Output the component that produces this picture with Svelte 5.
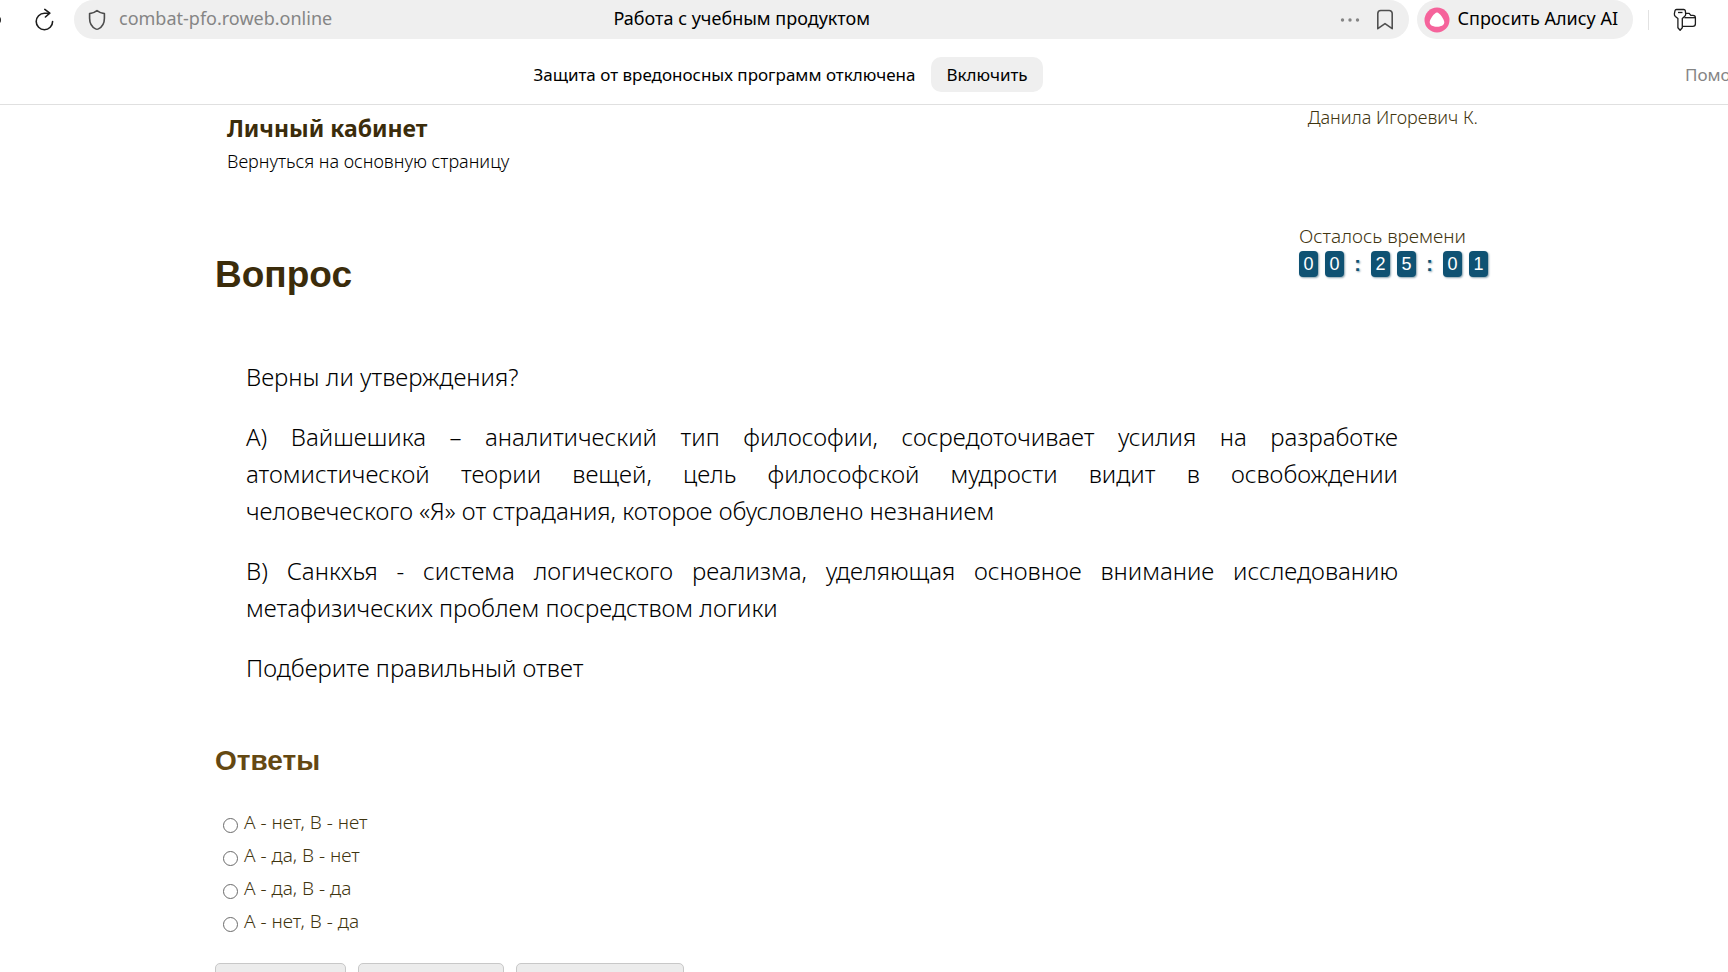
<script>
	const statements = [
		'Верны ли утверждения?',
		'A) Вайшешика – аналитический тип философии, сосредоточивает усилия на разработке атомистической теории вещей, цель философской мудрости видит в освобождении человеческого\u00a0«Я» от страдания, которое обусловлено незнанием',
		'B) Санкхья - система логического реализма, уделяющая основное внимание исследованию метафизических проблем посредством логики',
		'Подберите правильный ответ'
	];

	const answers = ['A - нет, B - нет', 'A - да, B - нет', 'A - да, B - да', 'A - нет, B - да'];

	// remaining time as hours, minutes, seconds
	const time = ['00', '25', '01'];

	let selected = $state('');
</script>

<div class="window">
	<div class="toolbar">
		<button class="icon back" aria-label="Назад">
			<svg width="6" height="20" viewBox="0 0 6 20"><circle cx="-3" cy="10" r="4" fill="#222" /></svg>
		</button>
		<button class="icon reload" aria-label="Обновить">
			<svg width="20" height="24" viewBox="0 0 20 24" fill="none" stroke="#1c1c1c" stroke-width="1.6" stroke-linecap="round" stroke-linejoin="round">
				<path d="M17.600 13.500A8.200 8.200 0 1 1 9.400 5.300h5" />
				<path d="M9.800 1.400l5 3.800-4.400 3.800" />
			</svg>
		</button>

		<div class="address">
			<svg width="18" height="22" viewBox="0 0 18 22" fill="none" stroke="#4c4c4c" stroke-width="1.6" stroke-linejoin="round">
				<path d="M9 1.600c2.200 1.700 4.700 2.700 7.400 3v4.600c0 5.400-2.600 8.900-6 10.700q-1.400 0.700-2.800 0c-3.400-1.800-6-5.300-6-10.700V4.600c2.700-.3 5.200-1.300 7.400-3z" />
			</svg>
			<span class="host">combat-pfo.roweb.online</span>
			<span class="page-title">Работа с учебным продуктом</span>
			<div class="actions">
				<button class="icon" aria-label="Ещё">
					<svg width="20" height="6" viewBox="0 0 20 6" fill="#858585">
						<circle cx="2.500" cy="3" r="1.700" />
						<circle cx="10" cy="3" r="1.700" />
						<circle cx="17.500" cy="3" r="1.700" />
					</svg>
				</button>
				<button class="icon" aria-label="В закладки">
					<svg width="18" height="22" viewBox="0 0 18 22" fill="none" stroke="#505050" stroke-width="1.600" stroke-linejoin="round">
						<path d="M1.800 4.500a3 3 0 0 1 3-3h8.400a3 3 0 0 1 3 3v15.200L9 14.600l-7.200 5.100z" />
					</svg>
				</button>
			</div>
		</div>

		<button class="alice">
			<svg width="26" height="26" viewBox="0 0 26 26">
				<circle cx="13" cy="13" r="12.500" fill="#f5639b" />
				<path d="M13 5.500c2.500 0 7.300 7 7.300 9.800 0 3-3.500 4.500-7.300 4.500s-7.300-1.500-7.300-4.500c0-2.800 4.800-9.800 7.300-9.800z" fill="#fff" />
			</svg>
			<span>Спросить Алису AI</span>
		</button>
		<span class="divider"></span>
		<button class="icon" aria-label="Пароли">
			<svg width="24" height="24" viewBox="0 0 24 24" fill="none" stroke="#1c1c1c" stroke-width="1.300" stroke-linejoin="round">
				<path d="M3.500 1.500h7.300q1.200 0 1.500 1.200l.4 3.200q0 1.600-1.200 2.700L9.300 10.600v9.200l-2.200 2.400-2.200-2.400v-9.200L2.400 8.600q-1.300-1.200-1-2.900l.6-3q.3-1.200 1.500-1.200z" />
				<path d="M5 4.500h4.500" />
				<path d="M12.700 5.400h3.500l1.600 1.900H20q2.400 0 2.400 2.400v6q0 2.600-2.600 2.600H9.400" />
				<path d="M11.400 9.700h11" />
			</svg>
		</button>
	</div>

	<div class="notice">
		<span>Защита от вредоносных программ отключена</span>
		<button class="enable">Включить</button>
		<a class="help" href="#help">Помощь</a>
	</div>

	<main>
		<header>
			<div>
				<h2>Личный кабинет</h2>
				<a class="home" href="#main">Вернуться на основную страницу</a>
			</div>
			<div class="user">Данила Игоревич К.</div>
		</header>

		<div class="heading">
			<h1>Вопрос</h1>
			<div class="timer">
				<div>Осталось времени</div>
				<div class="clock">
					{#each time as part, i}
						{#if i > 0}<span class="colon">:</span>{/if}
						{#each part as digit}
							<span class="digit">{digit}</span>
						{/each}
					{/each}
				</div>
			</div>
		</div>

		<section class="question">
			{#each statements as text}
				<p>{text}</p>
			{/each}
		</section>

		<h3>Ответы</h3>
		<form>
			{#each answers as answer}
				<label>
					<input type="radio" name="answer" value={answer} bind:group={selected} />
					{answer}
				</label>
			{/each}
			<div class="buttons">
				<button type="button" class="first" aria-label="Ответить"></button>
				<button type="button" class="second" aria-label="Пропустить"></button>
				<button type="button" class="third" aria-label="Завершить тест"></button>
			</div>
		</form>
	</main>
</div>

<style>
	.window {
		height: 100vh;
		overflow: hidden;
		background: #fff;
		color: #000;
		font: 18px/24px "Noto Sans", "Open Sans", sans-serif;
	}

	button {
		border: 0;
		padding: 0;
		background: none;
		color: inherit;
		font: inherit;
	}

	svg { display: block; flex: none; }

	h1, h2, h3, p { margin: 0; }

	.toolbar {
		display: flex;
		align-items: center;
		height: 39px;
	}

	.back { margin-right: 29px; }

	.reload { margin-right: 19px; }

	.address {
		position: relative;
		display: flex;
		flex: 1;
		align-items: center;
		gap: 13px;
		height: 39px;
		padding: 0 15px 0 14px;
		border-radius: 20px;
		background: #efefef;
	}

	.host { color: #858585; }

	.host, .page-title, .alice span { padding-bottom: 3px; }

	/* the title stays centred in the bar whatever the host takes */
	.page-title {
		position: absolute;
		left: 50%;
		transform: translateX(-50%);
		white-space: nowrap;
	}

	.actions {
		display: flex;
		align-items: center;
		gap: 16px;
		margin-left: auto;
	}

	.alice {
		display: flex;
		align-items: center;
		gap: 7px;
		height: 39px;
		margin-left: 8px;
		padding: 0 15px 0 7px;
		border-radius: 20px;
		background: #efefef;
	}

	.divider {
		width: 1px;
		height: 20px;
		margin: 0 24px 0 15px;
		background: #e2e2e2;
	}

	.toolbar > .icon:last-child { margin-right: 31px; }

	.notice {
		position: relative;
		display: flex;
		align-items: center;
		justify-content: center;
		gap: 16px;
		height: 59px;
		padding: 6px 152px 0 0;
		border-bottom: 1px solid #e0e0e0;
		font-size: 17px;
		font-weight: 380;
		overflow: hidden;
	}

	.enable {
		height: 35px;
		padding: 0 15px;
		border-radius: 10px;
		background: #efefef;
	}

	.help {
		position: absolute;
		left: calc(100% - 43px);
		color: #858585;
		text-decoration: none;
	}

	main {
		margin: 0 215px;
		color: #3f3510;
		font-weight: 360;
	}

	header, .heading {
		display: flex;
		justify-content: space-between;
	}

	header {
		padding: 0 35px 0 12px;
	}

	h2 {
		padding-top: 7px;
		color: #3b2c0b;
		font-size: 23px;
		font-weight: 700;
		line-height: 32px;
	}

	.home {
		display: block;
		margin-top: 3px;
		color: #000;
		font-weight: 300;
		line-height: 28px;
		text-decoration: none;
	}

	.heading {
		margin-top: 49px;
		padding-right: 25px;
	}

	h1 {
		padding-top: 29px;
		color: #3b2c0b;
		font: bold 37px/44px "Liberation Sans", Arial, sans-serif;
	}

	.timer {
		font-size: 19px;
		font-weight: 300;
	}

	.clock {
		display: flex;
		align-items: center;
		gap: 7px;
		margin-top: 3px;
		font: 18px/26px "Liberation Sans", Arial, sans-serif;
	}

	.digit {
		width: 19px;
		border-radius: 4px;
		background: #0f5273;
		box-shadow: 1px 1px 2px #8aa3b0;
		color: #fff;
		text-align: center;
	}

	.colon {
		width: 13px;
		color: #0f5273;
		font-size: 20px;
		font-weight: bold;
		text-align: center;
		text-shadow: 1px 1px 2px #8aa3b0;
	}

	.question {
		margin-top: 61px;
		padding: 0 115px 0 31px;
		color: #000;
		font-size: 24px;
		font-weight: 340;
		line-height: 37px;
		text-align: justify;
	}

	.question p + p { margin-top: 23px; }

	h3 {
		margin-top: 59px;
		color: #644812;
		font: bold 28px/32px "Liberation Sans", Arial, sans-serif;
	}

	form { margin-top: 29px; }

	label {
		display: flex;
		align-items: center;
		gap: 6px;
		padding-left: 8px;
		font-size: 19px;
		line-height: 33px;
	}

	input {
		appearance: none;
		box-sizing: border-box;
		width: 15px;
		height: 15px;
		margin: 6px 0 0;
		border: 1px solid #6b6b6b;
		border-radius: 50%;
		background: #fff;
	}

	input:checked { border: 4px solid #0f5273; }

	.buttons {
		display: flex;
		gap: 12px;
		margin-top: 25px;
	}

	.buttons button {
		height: 40px;
		border: 1px solid #c8c8c8;
		border-radius: 5px;
		background: #ececec;
	}

	.first { width: 131px; }
	.second { width: 146px; }
	.third { width: 168px; }
</style>
